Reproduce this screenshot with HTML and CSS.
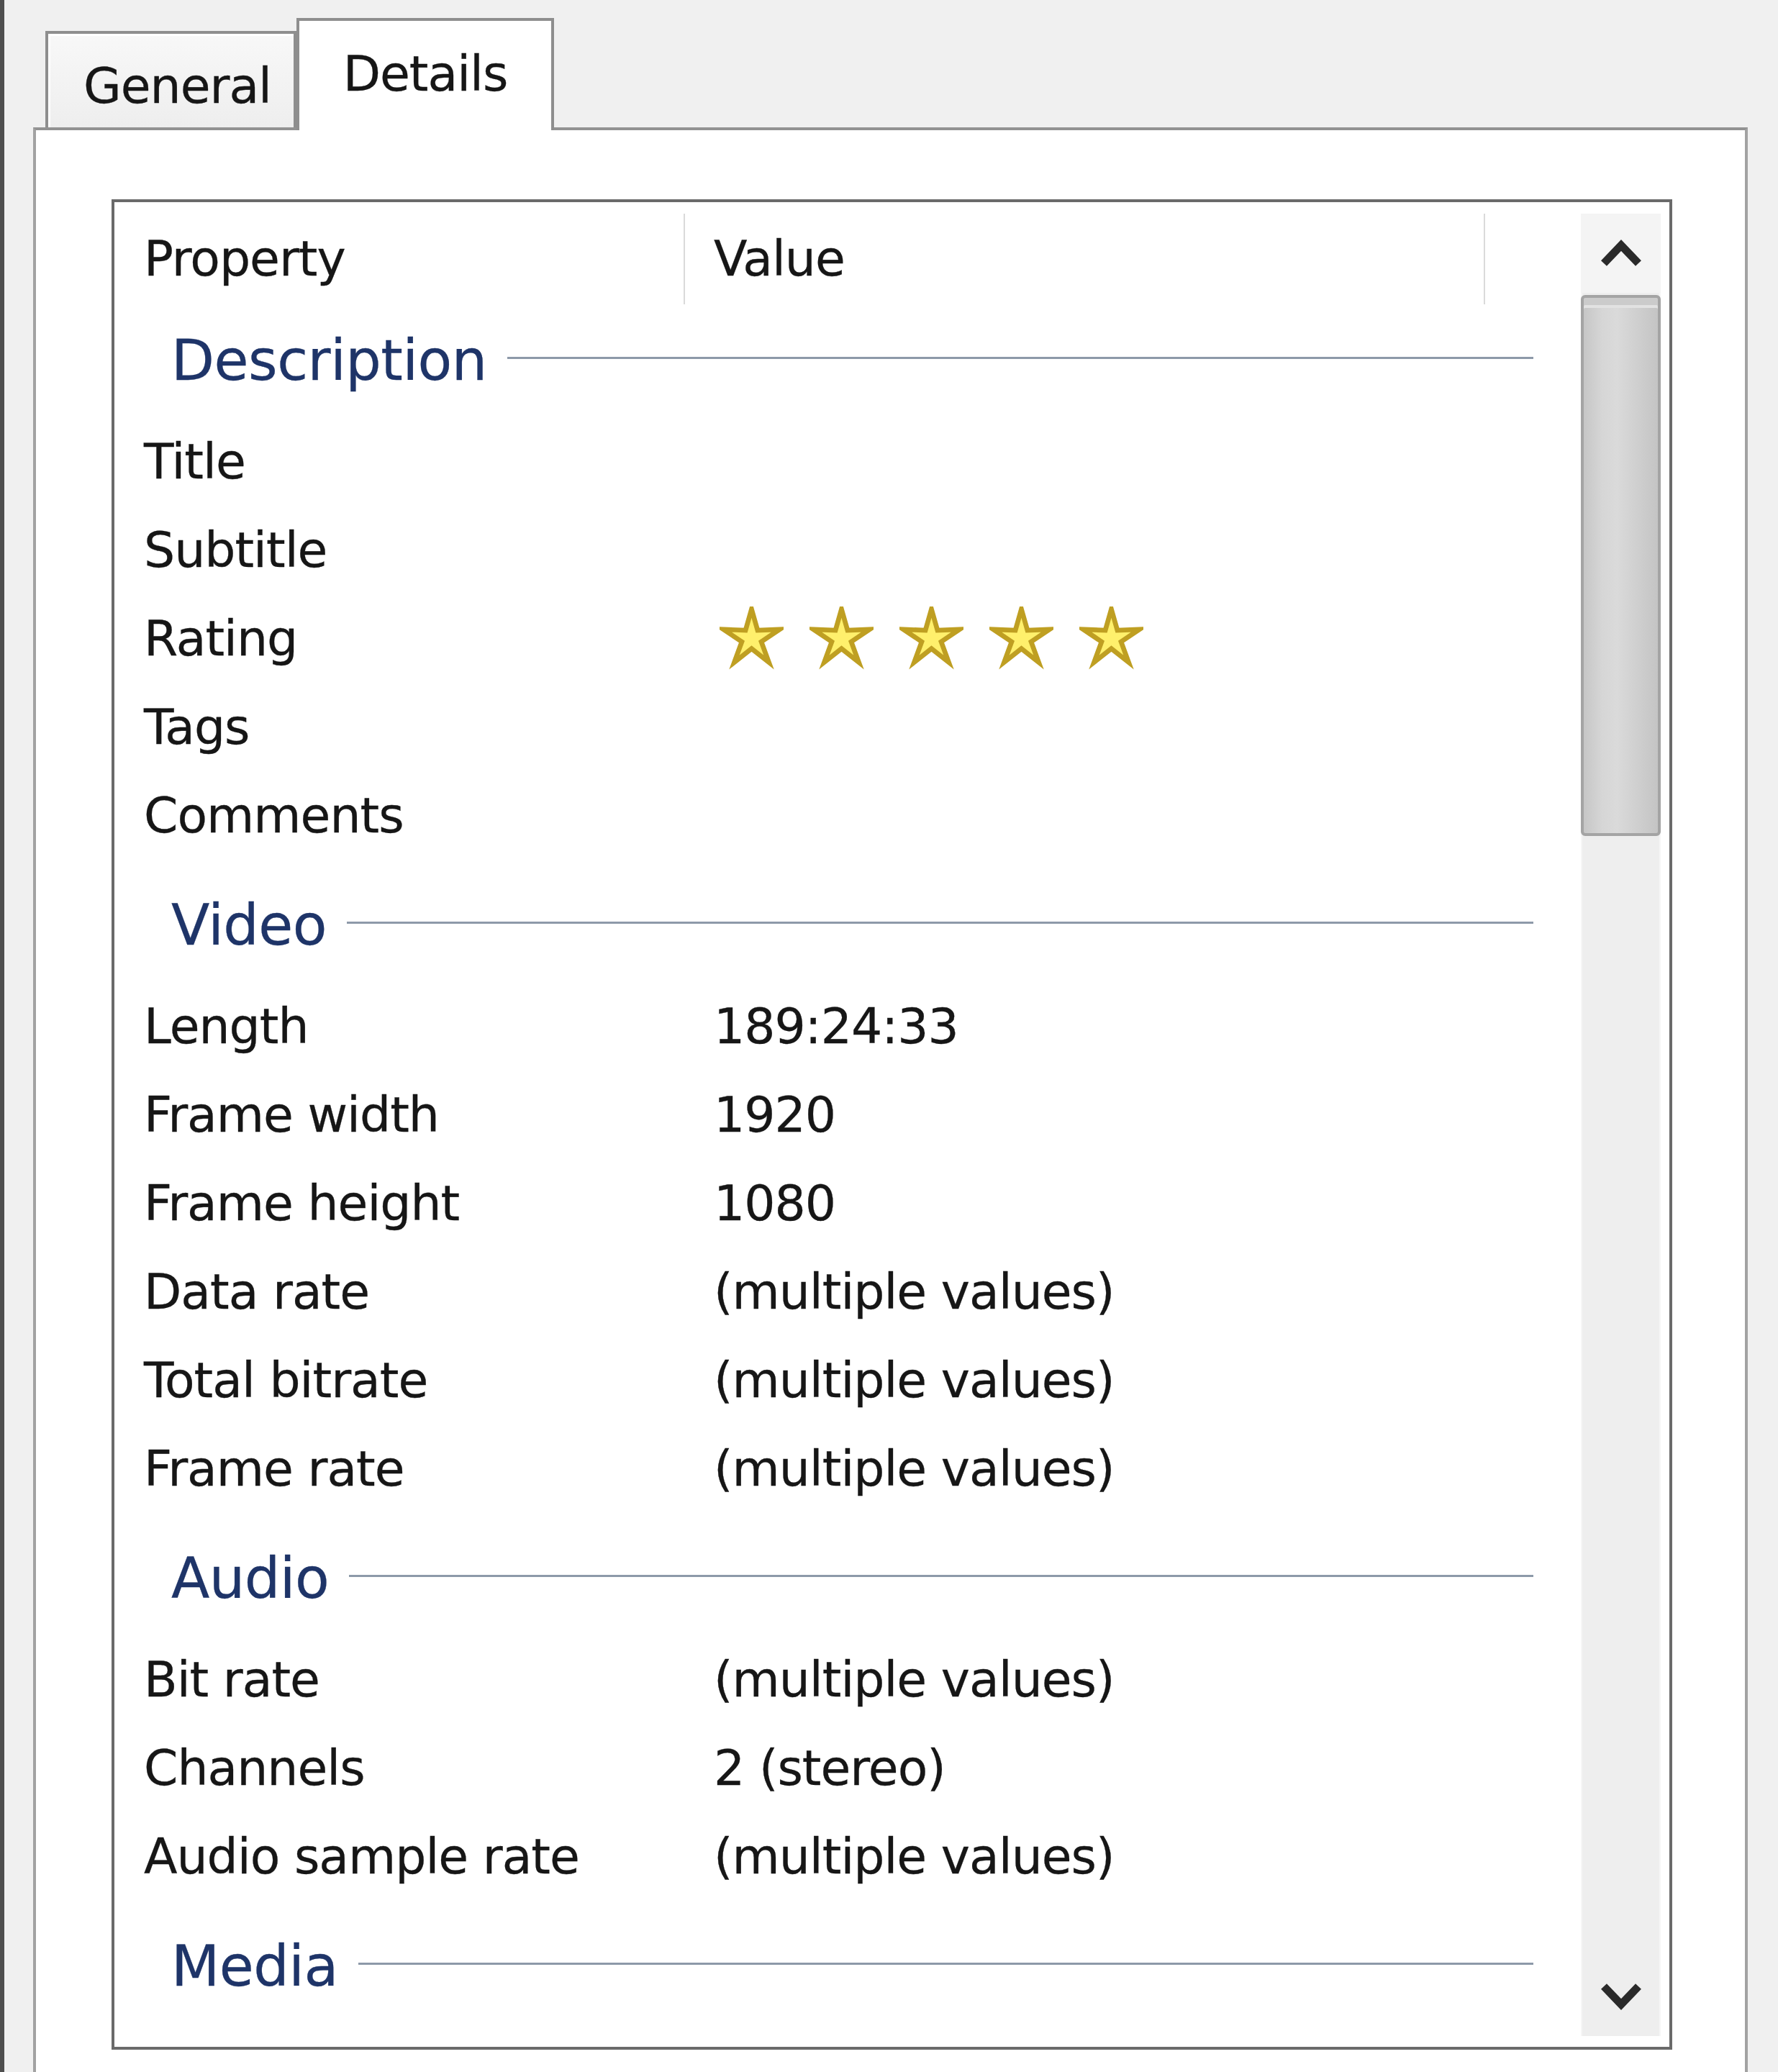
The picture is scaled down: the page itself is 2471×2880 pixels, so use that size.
FILE: index.html
```html
<!DOCTYPE html>
<html lang="en">
<head>
<meta charset="utf-8">
<title>Properties - Details</title>
<link rel="stylesheet" href="styles.css">
</head>
<body>
<div class="dialog">
  <div class="tabs">
    <div class="tab tab-general">General</div>
    <div class="tab tab-details">Details</div>
  </div>
  <div class="panel">
    <div class="list">
      <div class="rows">
        <div class="header">
          <div class="hcell h1">Property</div>
          <div class="hcell h2">Value</div>
          <div class="hcell h3"></div>
        </div>

        <div class="group">
          <div class="group-title"><span class="gname">Description</span><span class="gline"></span></div>
          <div class="row"><div class="prop">Title</div><div class="val"></div></div>
          <div class="row"><div class="prop">Subtitle</div><div class="val"></div></div>
          <div class="row"><div class="prop">Rating</div>
            <div class="val">
              <div class="stars">
                <svg class="star" viewBox="0 0 100 100"><path d="M50 4 L59.4 37.1 L93.8 35.8 L65.2 55 L77 87.2 L50 65.8 L23 87.2 L34.8 55 L6.2 35.8 L40.6 37.1 Z"/></svg>
                <svg class="star" viewBox="0 0 100 100"><path d="M50 4 L59.4 37.1 L93.8 35.8 L65.2 55 L77 87.2 L50 65.8 L23 87.2 L34.8 55 L6.2 35.8 L40.6 37.1 Z"/></svg>
                <svg class="star" viewBox="0 0 100 100"><path d="M50 4 L59.4 37.1 L93.8 35.8 L65.2 55 L77 87.2 L50 65.8 L23 87.2 L34.8 55 L6.2 35.8 L40.6 37.1 Z"/></svg>
                <svg class="star" viewBox="0 0 100 100"><path d="M50 4 L59.4 37.1 L93.8 35.8 L65.2 55 L77 87.2 L50 65.8 L23 87.2 L34.8 55 L6.2 35.8 L40.6 37.1 Z"/></svg>
                <svg class="star" viewBox="0 0 100 100"><path d="M50 4 L59.4 37.1 L93.8 35.8 L65.2 55 L77 87.2 L50 65.8 L23 87.2 L34.8 55 L6.2 35.8 L40.6 37.1 Z"/></svg>
              </div>
            </div>
          </div>
          <div class="row"><div class="prop">Tags</div><div class="val"></div></div>
          <div class="row"><div class="prop">Comments</div><div class="val"></div></div>
        </div>

        <div class="group">
          <div class="group-title"><span class="gname">Video</span><span class="gline"></span></div>
          <div class="row"><div class="prop">Length</div><div class="val">189:24:33</div></div>
          <div class="row"><div class="prop">Frame width</div><div class="val">1920</div></div>
          <div class="row"><div class="prop">Frame height</div><div class="val">1080</div></div>
          <div class="row"><div class="prop">Data rate</div><div class="val">(multiple values)</div></div>
          <div class="row"><div class="prop">Total bitrate</div><div class="val">(multiple values)</div></div>
          <div class="row"><div class="prop">Frame rate</div><div class="val">(multiple values)</div></div>
        </div>

        <div class="group">
          <div class="group-title"><span class="gname">Audio</span><span class="gline"></span></div>
          <div class="row"><div class="prop">Bit rate</div><div class="val">(multiple values)</div></div>
          <div class="row"><div class="prop">Channels</div><div class="val">2 (stereo)</div></div>
          <div class="row"><div class="prop">Audio sample rate</div><div class="val">(multiple values)</div></div>
        </div>

        <div class="group">
          <div class="group-title"><span class="gname">Media</span><span class="gline"></span></div>
        </div>
      </div>

      <div class="scrollbar">
        <div class="sb-btn sb-up">
          <svg class="chev" viewBox="0 0 56 44"><polyline points="4,36 28,11 52,36"/></svg>
        </div>
        <div class="sb-thumb"></div>
        <div class="sb-track"></div>
        <div class="sb-btn sb-down">
          <svg class="chev" viewBox="0 0 56 44"><polyline points="4,8 28,33 52,8"/></svg>
        </div>
      </div>
    </div>
  </div>
</div>
</body>
</html>
```
FILE: styles.css
```css
html, body {
  margin: 0;
  padding: 0;
}

body {
  width: 2471px;
  height: 2880px;
  overflow: hidden;
  background: #f0f0f0;
  font-family: "DejaVu Sans", "Noto Sans", sans-serif;
  font-size: 68px;
  letter-spacing: -1px;
  color: #161616;
  -webkit-text-stroke: 0.3px #161616;
}

.dialog {
  box-sizing: border-box;
  height: 2880px;
  display: flex;
  flex-direction: column;
  border-left: 6px solid #4f4f4f;
  padding: 25px 42px 0 40px;
}

/* ---------- tabs ---------- */
.tabs {
  display: flex;
  align-items: flex-end;
  height: 152px;
  padding-left: 17px;
  position: relative;
  z-index: 1;
}

.tab {
  box-sizing: border-box;
  border: 4px solid #8e8e8e;
  border-bottom: none;
  line-height: 80px;
  white-space: nowrap;
}

.tab-general {
  width: 349px;
  height: 134px;
  padding: 33px 0 0 49px;
  background: linear-gradient(#f8f8f8, #eeeeee);
  box-shadow: inset 3px 3px 0 #ffffff;
}

.tab-details {
  width: 358px;
  height: 156px;
  margin-bottom: -4px;
  padding-top: 34px;
  text-align: center;
  background: #ffffff;
}

/* ---------- panel ---------- */
.panel {
  flex: 1;
  background: #ffffff;
  border: 4px solid #a2a2a2;
  border-top-color: #929292;
  border-bottom: none;
  padding: 96px 101px 0 105px;
}

.list {
  box-sizing: border-box;
  height: 2572px;
  border: 4px solid #6a6a6a;
  display: flex;
  padding: 16px 12px 15px 0;
  background: #ffffff;
}

.rows {
  flex: 1;
  overflow: hidden;
}

/* ---------- header ---------- */
.header {
  display: grid;
  grid-template-columns: 791px 1112px 1fr;
  height: 126px;
  line-height: 126px;
}

.hcell {
  white-space: nowrap;
}

.h1 {
  padding-left: 41px;
}

.h2 {
  border-left: 2px solid #dadada;
  padding-left: 40px;
}

.h3 {
  border-left: 2px solid #dadada;
}

/* ---------- groups ---------- */
.group {
  margin-top: 30px;
}

.header + .group {
  margin-top: 17px;
}

.group-title {
  display: flex;
  align-items: center;
  height: 123px;
  padding: 0 66px 0 79px;
  margin-bottom: 17px;
}

.gname {
  font-size: 78px;
  letter-spacing: -0.5px;
  line-height: 123px;
  color: #1e3468;
  -webkit-text-stroke: 0.3px #1e3468;
  white-space: nowrap;
}

.gline {
  flex: 1;
  height: 3px;
  margin: -8px 0 0 28px;
  background: #8d99a9;
}

/* ---------- rows ---------- */
.row {
  display: grid;
  grid-template-columns: 791px 1fr;
  height: 123px;
  line-height: 123px;
  white-space: nowrap;
}

.prop {
  padding-left: 41px;
}

.val {
  padding-left: 42px;
}

.stars {
  display: flex;
  align-items: center;
  gap: 36px;
  height: 123px;
  padding-left: 8px;
}

.star {
  width: 89px;
  height: 89px;
  display: block;
}

.star path {
  fill: #fff06c;
  stroke: #bf9f22;
  stroke-width: 7.5;
  stroke-linejoin: miter;
}

/* ---------- scrollbar ---------- */
.scrollbar {
  width: 111px;
  display: flex;
  flex-direction: column;
  background: #eeeeee;
  box-shadow: inset 2px 0 0 #f6f6f6, inset -2px 0 0 #f6f6f6;
}

.sb-btn {
  height: 110px;
  display: flex;
  align-items: center;
  justify-content: center;
}

.sb-up {
  background: #f4f4f4;
}

.chev {
  width: 56px;
  height: 44px;
  display: block;
}

.chev polyline {
  fill: none;
  stroke: #2a2a2a;
  stroke-width: 11;
  stroke-linejoin: miter;
}

.sb-thumb {
  box-sizing: border-box;
  height: 752px;
  margin-top: 3px;
  border: 4px solid #a4a4a4;
  border-radius: 6px;
  background: linear-gradient(to right, #c6c6c6, #d6d6d6 25%, #dadada 45%, #d0d0d0 70%, #c4c4c4);
  box-shadow: inset 0 10px 0 #cbcbcb, inset 0 14px 0 #e2e2e2;
}

.sb-track {
  flex: 1;
}
```
